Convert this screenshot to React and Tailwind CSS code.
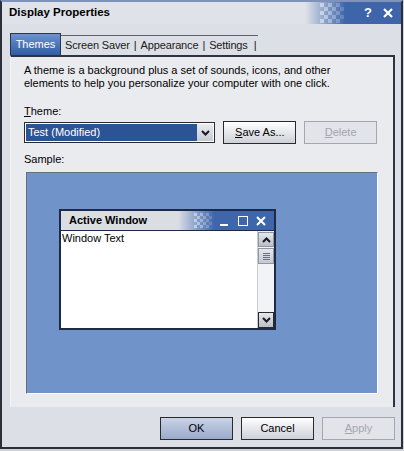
import React from 'react'

const Chevron = ({ up = false, className = '' }) => (
  <svg width="9" height="6" viewBox="0 0 9 6" className={className}>
    <polyline
      points={up ? '1,5 4.5,1.5 8,5' : '1,1 4.5,4.5 8,1'}
      fill="none"
      stroke="#1a1a1a"
      strokeWidth="2"
    />
  </svg>
)

// little checker pattern used on the title bars
const Checker = ({ cell = 4, cols = 6, rows = 5, className = '' }) => {
  const cells = []
  for (let r = 0; r < rows; r++) {
    for (let c = 0; c < cols; c++) {
      if ((r + c) % 2 === 0) {
        cells.push(
          <rect key={`${r}-${c}`} x={c * cell} y={r * cell} width={cell} height={cell} fill="#ffffff" opacity={0.1 + (cols - c) * 0.06} />
        )
      }
    }
  }
  return (
    <svg width={cols * cell} height={rows * cell} className={className}>
      {cells}
    </svg>
  )
}

const XpButton = ({ children, variant = 'normal', className = '' }) => {
  const styles = {
    normal: 'border-[#2a2a2a] bg-linear-to-b from-[#ffffff] to-[#cdd0d8] text-black',
    primary: 'border-[#2a2a2a] bg-linear-to-b from-[#c9d3e6] to-[#9aaacb] text-black',
    disabled: 'border-[#a3a7b0] bg-[#e2e4e9] text-[#a3a6ae]',
  }
  return (
    <button className={`h-[23px] w-[73px] border flex items-center justify-center text-[11px] ${styles[variant]} ${className}`}>
      {children}
    </button>
  )
}

const ActiveWindow = () => (
  <div className="w-[217px] h-[121px] border-2 border-[#1e2a45] bg-white flex flex-col">
    <div className="h-[19px] flex items-center bg-linear-to-r from-[#dadde4] from-55% to-[#3f66aa] to-72% relative">
      <span className="pl-[8px] font-bold text-[11px] text-black">Active Window</span>
      <Checker cell={3} cols={6} rows={5} className="absolute left-[133px] top-[2px]" />
      <div className="ml-auto flex items-center gap-[8px] pr-[8px] text-white font-bold">
        <span className="w-[10px] h-[10px] flex items-end"><span className="block w-[8px] h-[2px] bg-white"></span></span>
        <span className="w-[10px] h-[10px] border-[1.5px] border-white"></span>
        <svg width="10" height="10" viewBox="0 0 10 10"><path d="M1 1 L9 9 M9 1 L1 9" stroke="#fff" strokeWidth="2" /></svg>
      </div>
    </div>
    <div className="flex-1 flex border-t border-[#1e2a45]">
      <div className="flex-1 pl-[1px] pt-[1px] text-[11px] leading-[13px] text-black">Window Text</div>
      <div className="w-[17px] bg-[#f2f3f7] flex flex-col border-l border-[#c8ccd6]">
        <div className="h-[15px] mt-[1px] bg-linear-to-b from-[#e6e8ee] to-[#b9bec9] border border-[#9096a2] flex items-center justify-center">
          <Chevron up />
        </div>
        <div className="h-[16px] mt-[1px] bg-linear-to-b from-[#e6e8ee] to-[#c3c8d2] border border-[#9096a2] flex flex-col items-center justify-center gap-[1px]">
          <span className="block w-[7px] h-[1px] bg-[#6a707c]"></span>
          <span className="block w-[7px] h-[1px] bg-[#6a707c]"></span>
          <span className="block w-[7px] h-[1px] bg-[#6a707c]"></span>
          <span className="block w-[7px] h-[1px] bg-[#6a707c]"></span>
        </div>
        <div className="mt-auto h-[16px] bg-linear-to-b from-[#e6e8ee] to-[#b9bec9] border border-[#2a2a2a] flex items-center justify-center">
          <Chevron />
        </div>
      </div>
    </div>
  </div>
)

export default function App() {
  return (
    <div className="w-[404px] h-[451px] bg-[#cfd2d9] font-['Liberation_Sans',Arial,sans-serif] text-[11px] text-black">
      <div className="w-[403px] h-[449px] border-2 border-[#2c2f38] border-t-[#7f93ba] flex flex-col bg-[#dcdfe5]">
        {/* Title bar */}
        <div className="h-[22px] relative flex items-center bg-linear-to-r from-[#dfe2e8] from-76% to-[#3e65a9] to-86%">
          <span className="pl-[7px] font-bold text-[11.5px] text-black">Display Properties</span>
          <Checker cell={4} cols={6} rows={5} className="absolute left-[318px] top-[1px]" />
          <div className="ml-auto flex items-center gap-[11px] pr-[8px] text-white font-bold text-[13px]">
            <span>?</span>
            <svg width="10" height="10" viewBox="0 0 10 10"><path d="M1 1 L9 9 M9 1 L1 9" stroke="#fff" strokeWidth="2.2" /></svg>
          </div>
        </div>

        {/* Tabs */}
        <div className="pl-[8px] pt-[8px] flex items-end h-[31px]">
          <div className="h-[22px] w-[51px] border border-b-0 border-[#2b3550] bg-linear-to-b from-[#6d92cf] to-[#2f5ea4] text-white flex items-center justify-center text-[11px]">
            Themes
          </div>
          <div className="h-[20px] border-t border-[#5d6170] flex items-center text-[11px] text-[#1a1a1a] tracking-[-0.15px]">
            <span className="pl-[4px]">Screen Saver</span>
            <span className="px-[4px]">|</span>
            <span>Appearance</span>
            <span className="px-[4px]">|</span>
            <span>Settings</span>
            <span className="pl-[6px] pr-[2px]">|</span>
          </div>
        </div>

        {/* Panel */}
        <div className="ml-[8px] mr-[6px] h-[352px] border-t-2 border-r-2 border-l border-[#2e3342] border-l-[#f4f5f8] bg-[#eaebef] pl-[13px] pr-[16px] pt-[7px]">
          <p className="text-[11px] leading-[13px]">
            A theme is a background plus a set of sounds, icons, and other<br />
            elements to help you personalize your computer with one click.
          </p>

          <div className="mt-[15px] leading-[13px]">
            <span className="underline">T</span>heme:
          </div>
          <div className="mt-[3px] flex items-center">
            <div className="w-[192px] h-[21px] border border-[#2b2b2b] bg-white flex items-center p-[1px]">
              <div className="flex-1 h-full bg-[#2d5397] text-white flex items-center pl-[2px]">Test (Modified)</div>
              <div className="w-[16px] h-full bg-linear-to-b from-[#e9ebf0] to-[#c7cbd4] flex items-center justify-center">
                <Chevron />
              </div>
            </div>
            <XpButton className="ml-[8px]"><span><span className="underline">S</span>ave As...</span></XpButton>
            <XpButton variant="disabled" className="ml-[8px]"><span><span className="underline">D</span>elete</span></XpButton>
          </div>

          <div className="mt-[9px] leading-[13px]">Sample:</div>
          <div className="mt-[6px] ml-[2px] w-[352px] h-[222px] bg-[#7093c9] border border-[#6a6e78] border-r-white border-b-white pl-[32px] pt-[36px]">
            <ActiveWindow />
          </div>
        </div>

        {/* Footer buttons */}
        <div className="flex-1 flex items-center justify-end gap-[8px] pr-[6px] pt-[2px]">
          <XpButton variant="primary">OK</XpButton>
          <XpButton>Cancel</XpButton>
          <XpButton variant="disabled"><span><span className="underline">A</span>pply</span></XpButton>
        </div>
      </div>
    </div>
  )
}
